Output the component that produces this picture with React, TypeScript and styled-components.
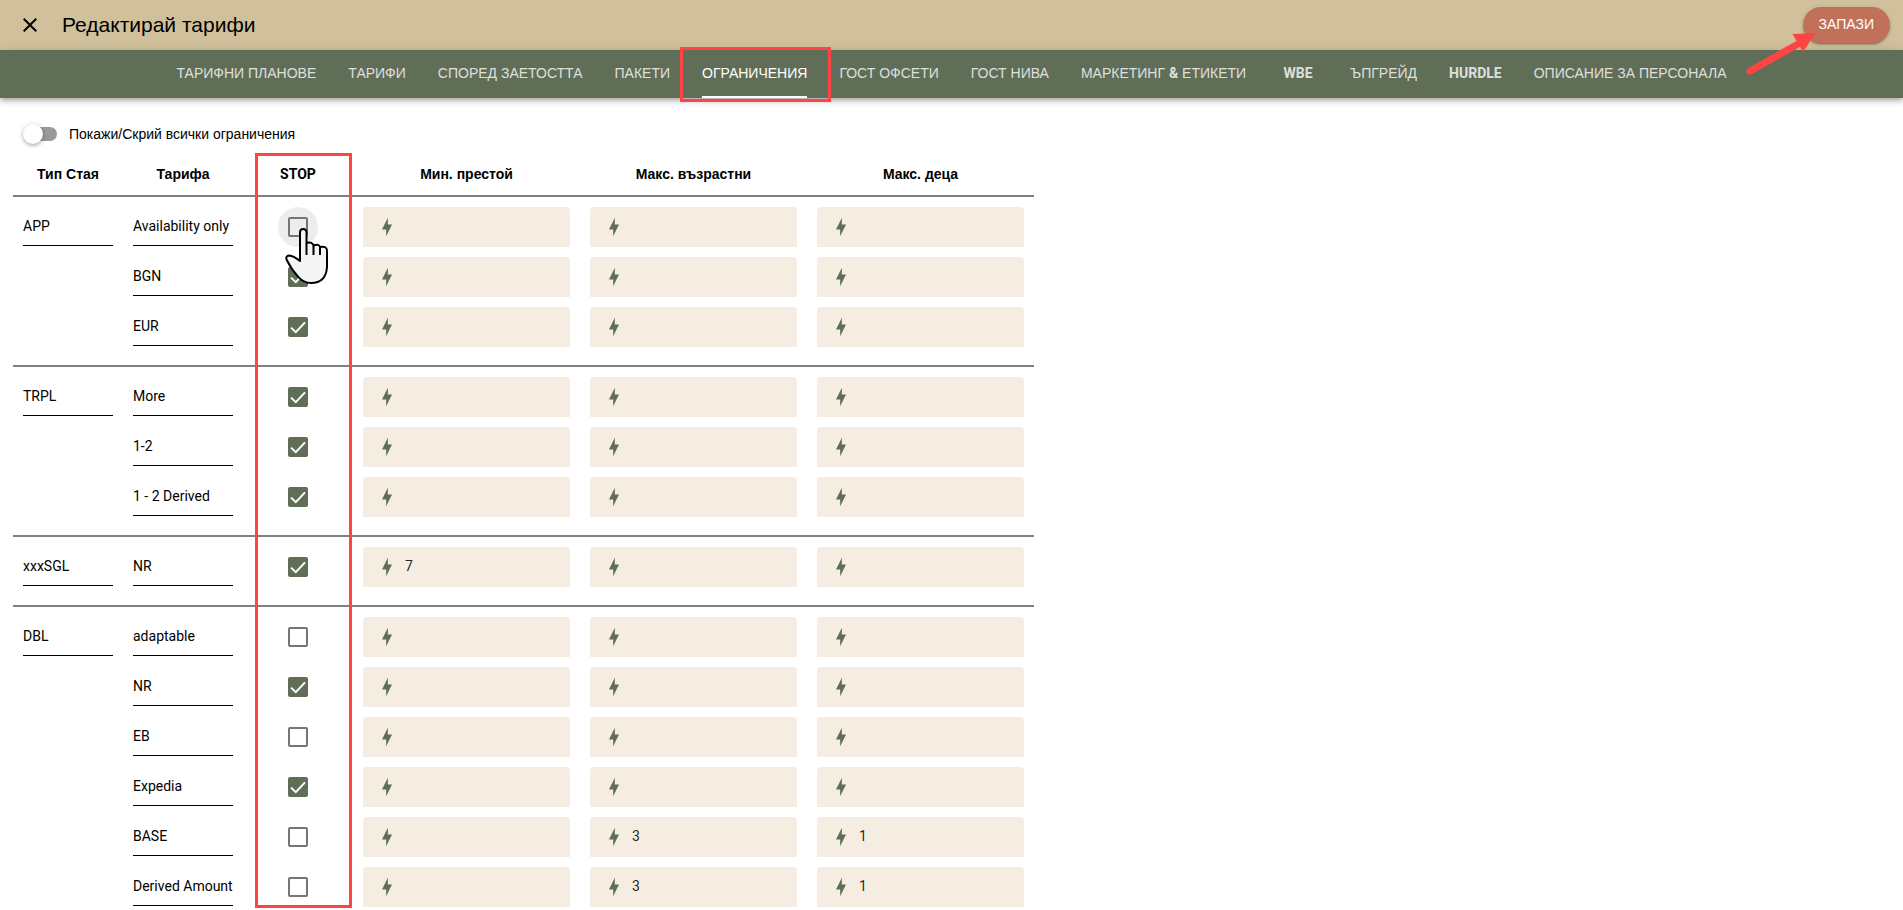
import React, { useState } from "react";
import styled, { createGlobalStyle } from "styled-components";

const colors = {
  sand: "#d0c09b",
  moss: "#616e57",
  clay: "#c1705a",
  cream: "#f5ece2",
  mark: "#ff4444",
};
const cyrillic = `"Liberation Sans", Arial, sans-serif`;
const latin = `Roboto, "Liberation Sans", sans-serif`;

const GlobalStyle = createGlobalStyle`
  *, *::before, *::after { box-sizing: border-box; }
  body { margin: 0; background: #fff; color: #000; font: 14px/20px ${latin}; overflow: hidden; }
  button, input { font: inherit; color: inherit; }
`;

const Header = styled.header`
  display: flex;
  align-items: center;
  height: 50px;
  padding: 0 13px 0 18px;
  background: ${colors.sand};
`;

const IconButton = styled.button`
  display: flex;
  padding: 0;
  border: 0;
  background: none;
  cursor: pointer;
`;

const Title = styled.h1`
  flex: 1;
  margin: 0 0 0 20px;
  font: 400 21px/28px ${cyrillic};
`;

const SaveWrap = styled.div`
  position: relative;
`;

const SaveButton = styled.button`
  height: 36px;
  padding: 0 16px 2px;
  border: 0;
  border-radius: 18px;
  background: ${colors.clay};
  color: #fff;
  font: 400 14px/20px ${cyrillic};
  box-shadow: 0 3px 1px -2px rgba(0, 0, 0, 0.2), 0 2px 2px rgba(0, 0, 0, 0.14), 0 1px 5px rgba(0, 0, 0, 0.12);
  cursor: pointer;
`;

const Arrow = styled.svg`
  position: absolute;
  top: 25px;
  left: -57px;
  pointer-events: none;
`;

const Tabs = styled.nav`
  display: flex;
  justify-content: center;
  height: 48px;
  background: ${colors.moss};
  box-shadow: 0 2px 4px -1px rgba(0, 0, 0, 0.2), 0 4px 5px rgba(0, 0, 0, 0.14), 0 1px 10px rgba(0, 0, 0, 0.12);
`;

const Tab = styled.a<{ $active: boolean; $latin: boolean }>`
  position: relative;
  display: flex;
  justify-content: center;
  min-width: 72px;
  padding: 0 16px;
  color: ${(p) => (p.$active ? "#fff" : "rgba(255, 255, 255, 0.8)")};
  font-family: ${(p) => (p.$latin ? latin : cyrillic)};
  font-weight: ${(p) => (p.$latin ? 700 : 400)};
  line-height: 46px;
  white-space: pre;
  text-decoration: none;
`;

const TabLabel = styled.span<{ $active: boolean }>`
  height: 48px;
  border-bottom: 2px solid ${(p) => (p.$active ? "#fff" : "transparent")};
`;

const Ampersand = styled.b`
  font-family: ${latin};
`;

const TabMark = styled.div`
  position: absolute;
  inset: -3px -8px -4px -6px;
  border: 3px solid ${colors.mark};
  z-index: 1;
`;

const Main = styled.main`
  padding: 24px 13px 0;
`;

const SwitchLabel = styled.label`
  display: flex;
  align-items: center;
  gap: 12px;
  width: max-content;
  height: 24px;
  padding-left: 12px;
  font-family: ${cyrillic};
  cursor: pointer;
`;

const Switch = styled.input`
  appearance: none;
  display: flex;
  align-items: center;
  width: 32px;
  height: 14px;
  margin: 0;
  border-radius: 7px;
  background: #9a9a9a;

  &::before {
    content: "";
    width: 20px;
    height: 20px;
    margin-left: -2px;
    border-radius: 50%;
    background: #fff;
    box-shadow: 0 2px 4px -1px rgba(0, 0, 0, 0.2), 0 1px 5px rgba(0, 0, 0, 0.24);
  }
  &:checked::before {
    margin-left: 14px;
  }
`;

const TableWrap = styled.div`
  position: relative;
  width: max-content;
`;

const Table = styled.table`
  width: 1021px;
  border-spacing: 0;
  table-layout: fixed;
`;

const HeadCell = styled.th<{ $latin?: boolean }>`
  height: 49px;
  padding: 6px 0 0;
  font-family: ${(p) => (p.$latin ? latin : cyrillic)};
  font-weight: 700;
  vertical-align: middle;
`;

const Cell = styled.td`
  height: 50px;
  padding: 10px 10px 0;
  text-align: center;
`;

const Group = styled.tbody`
  tr:first-child > td {
    border-top: 2px solid #808080;
  }
  tr:last-child > td {
    padding-bottom: 18px;
  }
`;

const NameInput = styled.input`
  display: block;
  width: 100%;
  height: 39px;
  margin-bottom: 1px;
  padding: 0;
  border: 0;
  border-bottom: 1px solid #000;
  border-radius: 0;
  background: none;
  outline: none;
`;

const LimitField = styled.label`
  display: flex;
  align-items: center;
  gap: 8px;
  height: 40px;
  padding: 0 14px;
  border-radius: 4px 4px 0 0;
  background: ${colors.cream};
`;

const LimitInput = styled.input`
  flex: 1;
  min-width: 0;
  height: 40px;
  padding: 0 0 2px;
  border: 0;
  background: none;
  outline: none;
  color: rgba(0, 0, 0, 0.87);
`;

const CheckHalo = styled.label<{ $hovered: boolean }>`
  display: grid;
  place-items: center;
  place-content: center;
  width: 40px;
  height: 40px;
  margin: 0 auto;
  border-radius: 50%;
  background: ${(p) => (p.$hovered ? "#ededed" : "transparent")};
  cursor: pointer;

  > * {
    grid-area: 1 / 1;
  }
`;

const CheckInput = styled.input`
  appearance: none;
  width: 20px;
  height: 20px;
  margin: 0;
  border: 2px solid #757575;
  border-radius: 2px;

  &:checked {
    border-color: ${colors.moss};
    background: ${colors.moss};
  }
`;

const Tick = styled.svg`
  z-index: 0;
  pointer-events: none;
`;

const StopMark = styled.div`
  position: absolute;
  top: 7px;
  left: 242px;
  width: 97px;
  bottom: 17px;
  border: 3px solid ${colors.mark};
  pointer-events: none;
`;

const Pointer = styled.svg`
  position: absolute;
  top: 80px;
  left: 269px;
  pointer-events: none;
`;

const tabs = [
  "ТАРИФНИ ПЛАНОВЕ",
  "ТАРИФИ",
  "СПОРЕД ЗАЕТОСТТА",
  "ПАКЕТИ",
  "ОГРАНИЧЕНИЯ",
  "ГОСТ ОФСЕТИ",
  "ГОСТ НИВА",
  "МАРКЕТИНГ & ЕТИКЕТИ",
  "WBE",
  "ЪПГРЕЙД",
  "HURDLE",
  "ОПИСАНИЕ ЗА ПЕРСОНАЛА",
];
const activeTab = "ОГРАНИЧЕНИЯ";

type Limits = [string, string, string];
interface Rate {
  name: string;
  stop: boolean;
  limits?: Limits;
  hovered?: boolean;
}

const limitNames = ["Мин. престой", "Макс. възрастни", "Макс. деца"];
const noLimits: Limits = ["", "", ""];

const groups: { room: string; rates: Rate[] }[] = [
  {
    room: "APP",
    rates: [
      { name: "Availability only", stop: false, hovered: true },
      { name: "BGN", stop: true },
      { name: "EUR", stop: true },
    ],
  },
  {
    room: "TRPL",
    rates: [
      { name: "More", stop: true },
      { name: "1-2", stop: true },
      { name: "1 - 2 Derived", stop: true },
    ],
  },
  { room: "xxxSGL", rates: [{ name: "NR", stop: true, limits: ["7", "", ""] }] },
  {
    room: "DBL",
    rates: [
      { name: "adaptable", stop: false },
      { name: "NR", stop: true },
      { name: "EB", stop: false },
      { name: "Expedia", stop: true },
      { name: "BASE", stop: false, limits: ["", "3", "1"] },
      { name: "Derived Amount", stop: false, limits: ["", "3", "1"] },
    ],
  },
];

function Bolt() {
  return (
    <svg width="20" height="20" viewBox="0 0 24 24" fill={colors.moss} aria-hidden="true">
      <path d="M11 15H6L13 1V9H18L11 23V15Z" />
    </svg>
  );
}

function StopCheckbox({ rate, room }: { rate: Rate; room: string }) {
  const [checked, setChecked] = useState(rate.stop);
  return (
    <CheckHalo $hovered={!!rate.hovered}>
      <CheckInput
        type="checkbox"
        aria-label={`STOP ${room} ${rate.name}`}
        checked={checked}
        onChange={(e) => setChecked(e.target.checked)}
      />
      {checked && (
        <Tick width="20" height="20" viewBox="0 0 20 20" fill="none" stroke="#fff" strokeWidth="2">
          <path d="M3 10.6L7.8 15.2L17 5.4" />
        </Tick>
      )}
    </CheckHalo>
  );
}

function RateRow({ rate, room, first }: { rate: Rate; room: string; first: boolean }) {
  return (
    <tr>
      <Cell>{first && <NameInput aria-label="Тип Стая" readOnly value={room} />}</Cell>
      <Cell>
        <NameInput aria-label="Тарифа" readOnly value={rate.name} />
      </Cell>
      <Cell>
        <StopCheckbox rate={rate} room={room} />
      </Cell>
      {(rate.limits ?? noLimits).map((value, i) => (
        <Cell key={limitNames[i]}>
          <LimitField>
            <Bolt />
            <LimitInput aria-label={limitNames[i]} defaultValue={value} />
          </LimitField>
        </Cell>
      ))}
    </tr>
  );
}

export default function App() {
  return (
    <>
      <GlobalStyle />
      <Header>
        <IconButton type="button" aria-label="Затвори">
          <svg width="24" height="24" viewBox="0 0 24 24" aria-hidden="true">
            <path d="M19,6.41L17.59,5L12,10.59L6.41,5L5,6.41L10.59,12L5,17.59L6.41,19L12,13.41L17.59,19L19,17.59L13.41,12L19,6.41Z" />
          </svg>
        </IconButton>
        <Title>Редактирай тарифи</Title>
        <SaveWrap>
          <SaveButton type="button">ЗАПАЗИ</SaveButton>
          <Arrow width="70" height="52" viewBox="0 0 70 52" fill={colors.mark} aria-hidden="true">
            <path d="M4 39L54 11" stroke={colors.mark} strokeWidth="7" strokeLinecap="round" />
            <path d="M46.500 2L69.500 1L57 20Z" />
          </Arrow>
        </SaveWrap>
      </Header>
      <Tabs>
        {tabs.map((tab) => {
          const active = tab === activeTab;
          const [before, after] = tab.split("&");
          return (
            <Tab key={tab} href="#" $active={active} $latin={/^[A-Z]+$/.test(tab)}>
              <TabLabel $active={active}>
                {before}
                {after && <Ampersand>&amp;</Ampersand>}
                {after}
              </TabLabel>
              {active && <TabMark />}
            </Tab>
          );
        })}
      </Tabs>
      <Main>
        <SwitchLabel>
          <Switch type="checkbox" role="switch" />
          Покажи/Скрий всички ограничения
        </SwitchLabel>
        <TableWrap>
          <Table>
            <colgroup>
              <col width="110" />
              <col width="120" />
              <col width="110" />
              <col width="227" />
              <col width="227" />
              <col width="227" />
            </colgroup>
            <thead>
              <tr>
                <HeadCell scope="col">Тип Стая</HeadCell>
                <HeadCell scope="col">Тарифа</HeadCell>
                <HeadCell scope="col" $latin>
                  STOP
                </HeadCell>
                {limitNames.map((name) => (
                  <HeadCell key={name} scope="col">
                    {name}
                  </HeadCell>
                ))}
              </tr>
            </thead>
            {groups.map((group) => (
              <Group key={group.room}>
                {group.rates.map((rate, i) => (
                  <RateRow key={rate.name} rate={rate} room={group.room} first={i === 0} />
                ))}
              </Group>
            ))}
          </Table>
          <StopMark />
          <Pointer width="50" height="60" viewBox="0 0 50 60" aria-hidden="true">
            <path
              d="M18 35V6.500Q18 3 21 3Q24.500 3 24.500 6.500V17Q30.500 15.500 31.500 19.500Q37 17.500 38 21Q45 19.500 45 25V41Q44 57 29 57Q21 57 15.500 50Q10 44 5 34.500Q3 30 7 29.500Q12 30 18 35Z"
              fill="#f5f5f5"
              stroke="#000"
              strokeWidth="2"
              strokeLinejoin="round"
            />
            <path
              d="M24.500 17V29M31.500 19.500V29M38 21V29"
              fill="none"
              stroke="#000"
              strokeWidth="2"
            />
          </Pointer>
        </TableWrap>
      </Main>
    </>
  );
}
